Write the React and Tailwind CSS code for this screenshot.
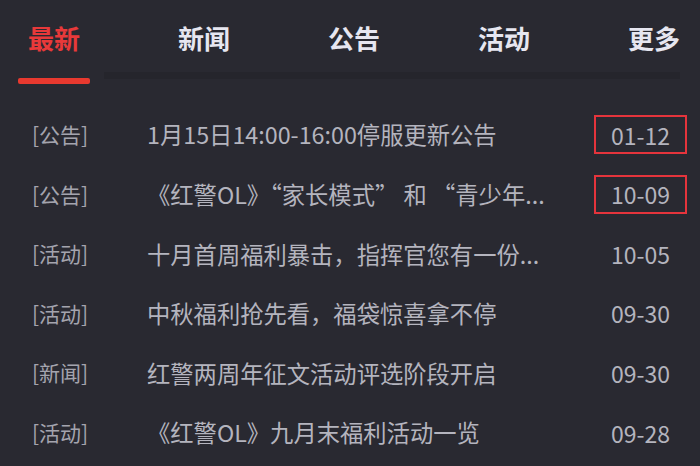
const tabs = ["最新", "新闻", "公告", "活动", "更多"];

const news = [
  { tag: "[公告]", title: "1月15日14:00-16:00停服更新公告", date: "01-12", boxed: true },
  { tag: "[公告]", title: "《红警OL》“家长模式” 和 “青少年...", date: "10-09", boxed: true },
  { tag: "[活动]", title: "十月首周福利暴击，指挥官您有一份...", date: "10-05" },
  { tag: "[活动]", title: "中秋福利抢先看，福袋惊喜拿不停", date: "09-30" },
  { tag: "[新闻]", title: "红警两周年征文活动评选阶段开启", date: "09-30" },
  { tag: "[活动]", title: "《红警OL》九月末福利活动一览", date: "09-28" },
];

const App = () => {
  return (
    <div className="w-[700px] h-[466px] overflow-hidden bg-[#292931] font-['Noto_Sans_CJK_SC','Noto_Sans',sans-serif]">
      <nav className="relative pt-[19px] h-[87px]">
        <ul className="flex justify-between pl-[18px] pr-[10px]">
          {tabs.map((t, i) => (
            <li
              key={t}
              className={`w-[72px] text-center text-[26px] leading-[38px] font-bold ${i === 0 ? "text-[#e8393a]" : "text-[#e6e6f0]"}`}
            >
              {t}
            </li>
          ))}
        </ul>
        <div className="flex items-start mt-[15px]">
          <div className="ml-[18px] w-[72px] h-[6px] mt-[6px] rounded-[2px] bg-[#e8392f]" />
          <div className="ml-[14px] w-[576px] h-[7px] bg-[#25252c]" />
        </div>
      </nav>
      <ul className="mt-[18px]">
        {news.map((n, i) => (
          <li key={i} className="flex items-center h-[59.6px]">
            <span className="w-[147px] pl-[32px] text-[21px] text-[#a4a4ae]">{n.tag}</span>
            <span className="flex-1 text-[23.3px] text-[#b4b4be] whitespace-pre">{n.title}</span>
            <span
              className={`mr-[13px] w-[93px] h-[39px] flex items-center justify-center text-[23px] text-[#b4b4be] ${n.boxed ? "border-2 border-[#e5343c]" : ""}`}
            >
              {n.date}
            </span>
          </li>
        ))}
      </ul>
    </div>
  );
};

export default App;
